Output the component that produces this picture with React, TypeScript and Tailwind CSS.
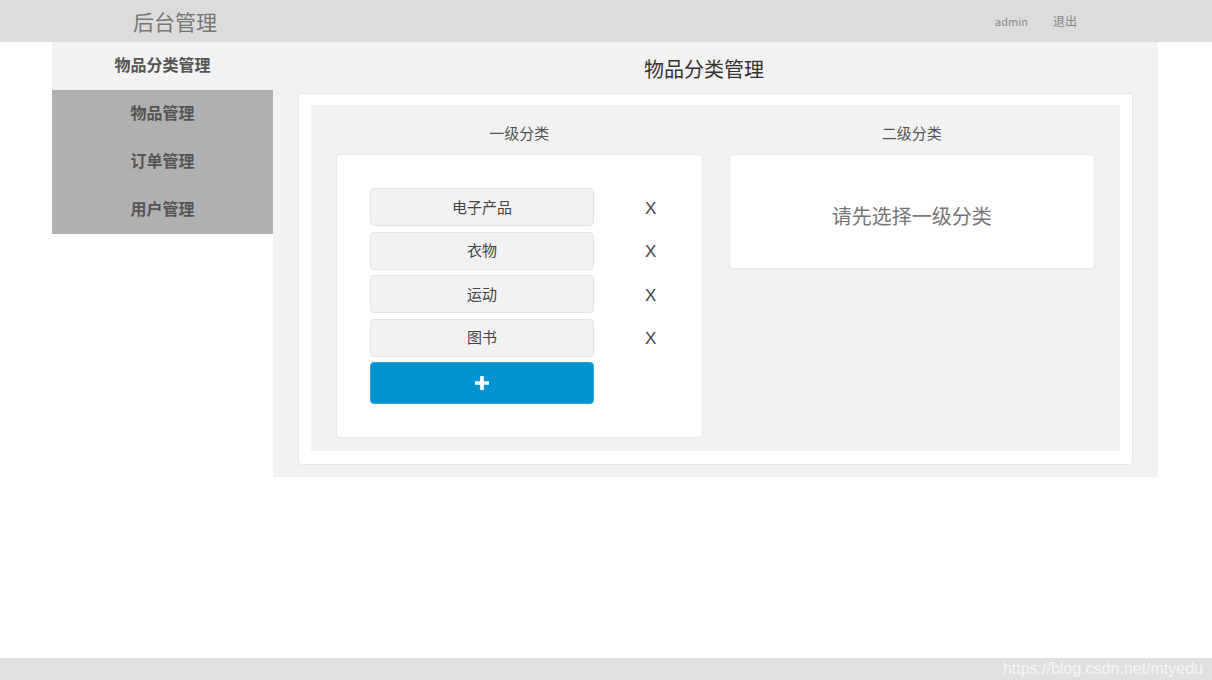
const cjk = { fontFamily: '"Noto Sans CJK SC", "Noto Sans", sans-serif' };

const menu = [
  { label: "物品分类管理", active: true },
  { label: "物品管理" },
  { label: "订单管理" },
  { label: "用户管理" },
];

const categories = ["电子产品", "衣物", "运动", "图书"];

function PlusIcon() {
  return (
    <svg viewBox="0 0 14 14" className="h-[14px] w-[14px]" aria-hidden="true">
      <path d="M7 0v14M0 7h14" stroke="white" strokeWidth="3.6" />
    </svg>
  );
}

export default function App() {
  return (
    <div className="flex min-h-screen flex-col bg-white" style={cjk}>
      <header className="flex h-[42px] items-center bg-[#dcdcdc]">
        <h1 className="ml-[133px] text-[21px] leading-none text-[#777]">后台管理</h1>
        <div className="ml-auto mr-[135px] flex items-center gap-[25px] text-[#888]">
          <span className="text-[11px]">admin</span>
          <span className="text-[12px]">退出</span>
        </div>
      </header>

      <div className="ml-[52px] flex w-[1106px] items-start">
        <nav className="w-[221px]">
          {menu.map((item) => (
            <div
              key={item.label}
              className={`flex h-[48px] items-center justify-center pb-[4px] text-[16px] font-bold text-[#555] ${
                item.active ? "bg-[#f2f2f2]" : "bg-[#b0b0b0]"
              }`}
            >
              {item.label}
            </div>
          ))}
        </nav>

        <main className="flex-1 bg-[#f2f2f2] px-[25px] pb-[12px]">
          <div className="flex h-[51px] items-center justify-center pt-[2px] pr-[23px] text-[20px] text-[#333]">
            物品分类管理
          </div>
          <div className="rounded-[4px] border border-[#e6e6e6] bg-white px-[12px] pt-[11px] pb-[13px]">
            <div className="grid grid-cols-2 items-start gap-[26px] bg-[#f2f2f2] px-[25px] pt-[18px] pb-[13px]">
              <section>
                <h3 className="mb-[11px] text-center text-[15px] leading-[20px] text-[#555]">一级分类</h3>
                <div className="rounded-[4px] border border-[#e8e8e8] bg-white px-[33px] pt-[33px] pb-[33px]">
                  <div className="flex flex-col gap-[5.5px]">
                    {categories.map((c) => (
                      <div key={c} className="flex items-center">
                        <button className="h-[38px] w-[224px] shrink-0 rounded-[4px] border border-[#e4e4e4] bg-[#f2f2f2] text-[15px] text-[#444]">
                          {c}
                        </button>
                        <span
                          className="ml-[51px] pt-[3px] text-[17px] text-[#444]"
                          style={{ fontFamily: '"Liberation Sans", Arial, sans-serif' }}
                        >
                          X
                        </span>
                      </div>
                    ))}
                    <button className="flex h-[42px] w-[224px] items-center justify-center rounded-[4px] border border-[#2aa3d8] bg-[#0094d2]">
                      <PlusIcon />
                    </button>
                  </div>
                </div>
              </section>

              <section>
                <h3 className="mb-[11px] text-center text-[15px] leading-[20px] text-[#555]">二级分类</h3>
                <div className="flex h-[115px] items-center justify-center rounded-[4px] border border-[#e8e8e8] bg-white pt-[8px] text-[20px] text-[#777]">
                  请先选择一级分类
                </div>
              </section>
            </div>
          </div>
        </main>
      </div>

      <footer className="mt-auto flex h-[22px] items-center justify-end bg-[#e0e0e0] pr-[9px]">
        <span
          className="text-[16px] leading-none text-[#f6f6f6]"
          style={{ fontFamily: '"Liberation Sans", Arial, sans-serif' }}
        >
          https://blog.csdn.net/mtyedu
        </span>
      </footer>
    </div>
  );
}
